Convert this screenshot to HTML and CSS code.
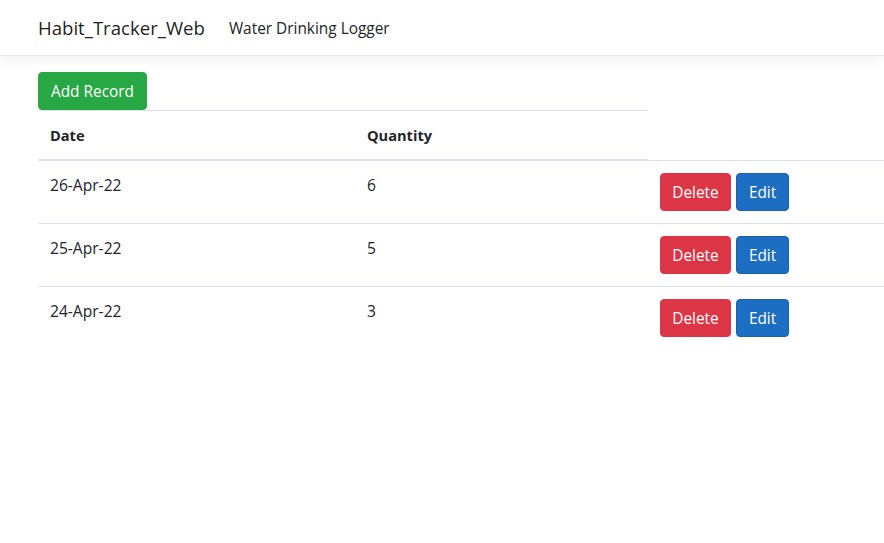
FILE: index.html
```html
<!DOCTYPE html>
<html lang="en">
<head>
<meta charset="utf-8">
<title>Habit_Tracker_Web</title>
<link rel="stylesheet" href="styles.css">
</head>
<body>
<header class="navbar">
  <a class="brand" href="#">Habit_Tracker_Web</a>
  <a class="nav-link" href="#">Water Drinking Logger</a>
</header>
<main class="container">
  <button class="btn btn-success">Add Record</button>
  <table class="table">
    <colgroup>
      <col class="c1"><col class="c2"><col class="c3">
    </colgroup>
    <thead>
      <tr><th>Date</th><th>Quantity</th></tr>
    </thead>
    <tbody>
      <tr><td>26-Apr-22</td><td>6</td><td><button class="btn btn-danger">Delete</button> <button class="btn btn-primary">Edit</button></td></tr>
      <tr><td>25-Apr-22</td><td>5</td><td><button class="btn btn-danger">Delete</button> <button class="btn btn-primary">Edit</button></td></tr>
      <tr><td>24-Apr-22</td><td>3</td><td><button class="btn btn-danger">Delete</button> <button class="btn btn-primary">Edit</button></td></tr>
    </tbody>
  </table>
</main>
</body>
</html>
```
FILE: styles.css
```css
* { box-sizing: border-box; }
html, body { margin: 0; background: #fff; overflow-x: hidden; }
body {
  font-family: "Open Sans", "Noto Sans", sans-serif;
  font-size: 15.5px;
  line-height: 24px;
  color: #212529;
}
.navbar {
  display: flex;
  align-items: center;
  height: 56px;
  padding: 0 38px;
  border-bottom: 1px solid #e5e5e5;
  box-shadow: 0 4px 12px rgba(0,0,0,.05);
  margin-bottom: 16px;
}
.brand {
  font-size: 18.6px;
  color: rgba(0,0,0,.9);
  text-decoration: none;
  margin-right: 24px;
  line-height: 30px;
}
.nav-link {
  font-size: 15.4px;
  color: #212529;
  text-decoration: none;
  padding-top: 2px;
}
.container { padding-left: 38px; }
.btn {
  display: inline-block;
  font-family: inherit;
  font-size: 15.4px;
  line-height: 24px;
  padding: 7px 0 5px;
  border: 1px solid transparent;
  border-radius: 4px;
  color: #fff;
  cursor: pointer;
}
.btn-success { background: #28a745; border-color: #28a745; width: 109px; }
.btn-danger { background: #dc3545; border-color: #dc3545; width: 71px; }
.btn-primary { background: #1b6ec2; border-color: #1861ac; width: 53px; margin-left: 1px; }
.table {
  border-collapse: collapse;
  width: 846px;
  table-layout: fixed;
  margin-top: 0;
}
.c1 { width: 317px; }
.c2 { width: 293px; }
.c3 { width: 236px; }
.table th, .table td {
  padding: 12px;
  text-align: left;
  vertical-align: top;
  border-top: 1px solid #dee2e6;
}
.table th { font-weight: 700; font-size: 14.6px; border-bottom: 2px solid #dee2e6; }
.table td { font-size: 15.6px; }
.table td:last-child { white-space: nowrap; }
```
